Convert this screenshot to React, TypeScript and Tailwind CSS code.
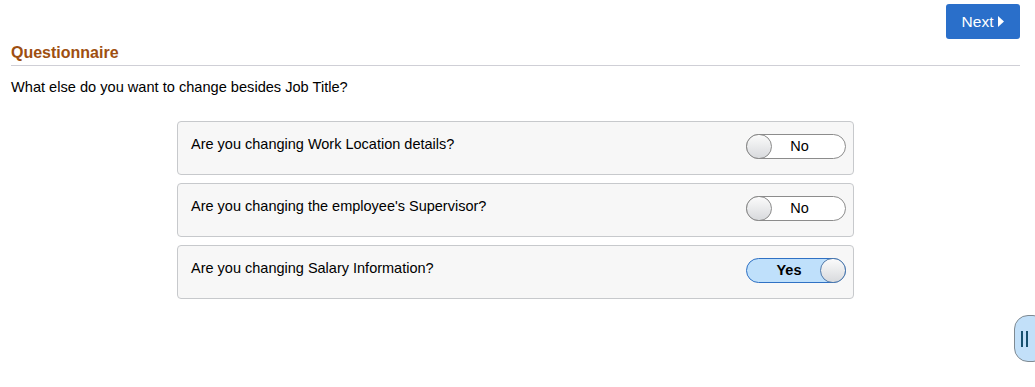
import React, { useState } from 'react';

type Q = { id: string; label: string; value: boolean };

function Toggle({ on, onClick }: { on: boolean; onClick: () => void }) {
    return (
        <button
            onClick={onClick}
            className={`relative w-[100px] h-[25px] rounded-full border flex items-center text-[14.5px] ${on ? 'bg-[#bfe0fb] border-[#2f71c4] font-bold text-black' : 'bg-white border-[#8c8c8c] text-black'}`}
        >
            <span className={`absolute top-[-1px] w-[26px] h-[25px] rounded-full border bg-gradient-to-b from-[#fbfbfb] to-[#d8dadd] ${on ? 'right-[-1px] border-[#4f79aa]' : 'left-[-1px] border-[#8a8a8a]'}`} />
            <span className={`flex-1 text-center ${on ? 'pr-[14px] pt-[1px]' : 'pl-[7px]'}`}>{on ? 'Yes' : 'No'}</span>
        </button>
    );
}

export default function App() {
    const [questions, setQuestions] = useState<Q[]>([
        { id: 'loc', label: 'Are you changing Work Location details?', value: false },
        { id: 'sup', label: "Are you changing the employee's Supervisor?", value: false },
        { id: 'sal', label: 'Are you changing Salary Information?', value: true },
    ]);

    const flip = (id: string) =>
        setQuestions(qs => qs.map(q => (q.id === id ? { ...q, value: !q.value } : q)));

    return (
        <div className="relative w-[1035px] h-[387px] bg-white overflow-hidden font-['Liberation_Sans',Arial,sans-serif] text-[#1f1f1f]">
            <div className="flex justify-end pt-[4px] pr-[15px]">
                <button className="w-[74px] h-[35px] rounded-[3px] bg-[#2a6fca] text-white text-[15.5px] flex items-center justify-center gap-[5px]">
                    Next
                    <svg width="6" height="11" viewBox="0 0 6 11"><path d="M0 0 L6 5.5 L0 11 Z" fill="white" /></svg>
                </button>
            </div>

            <div className="mx-[11px] mr-[15px] mt-[5px] border-b border-[#cfcfd6] pb-[3px]">
                <h2 className="text-[16px] font-bold text-[#9e4f10] leading-[18px]">Questionnaire</h2>
            </div>

            <p className="ml-[11px] mt-[13px] text-[14.6px] text-black leading-[17px]">What else do you want to change besides Job Title?</p>

            <div className="ml-[177px] w-[677px] mt-[25px] flex flex-col gap-[8px]">
                {questions.map(q => (
                    <div key={q.id} className="h-[54px] rounded-[4px] border border-[#c7c9cc] bg-[#f7f7f7] flex items-start justify-between pl-[13px] pr-[7px]">
                        <span className="text-[14.5px] text-black mt-[14px] leading-[17px]">{q.label}</span>
                        <div className="mt-[12px]">
                            <Toggle on={q.value} onClick={() => flip(q.id)} />
                        </div>
                    </div>
                ))}
            </div>

            <div className="absolute right-[-12px] top-[315px] w-[33px] h-[47px] rounded-l-[14px] rounded-r-[14px] border border-[#7f8a92] bg-[#c2e0f9] flex items-center pl-[6px]">
                <span className="flex gap-[3px]">
                    <span className="w-[2px] h-[16px] bg-[#16506e]" />
                    <span className="w-[2px] h-[16px] bg-[#16506e]" />
                </span>
            </div>
        </div>
    );
}
